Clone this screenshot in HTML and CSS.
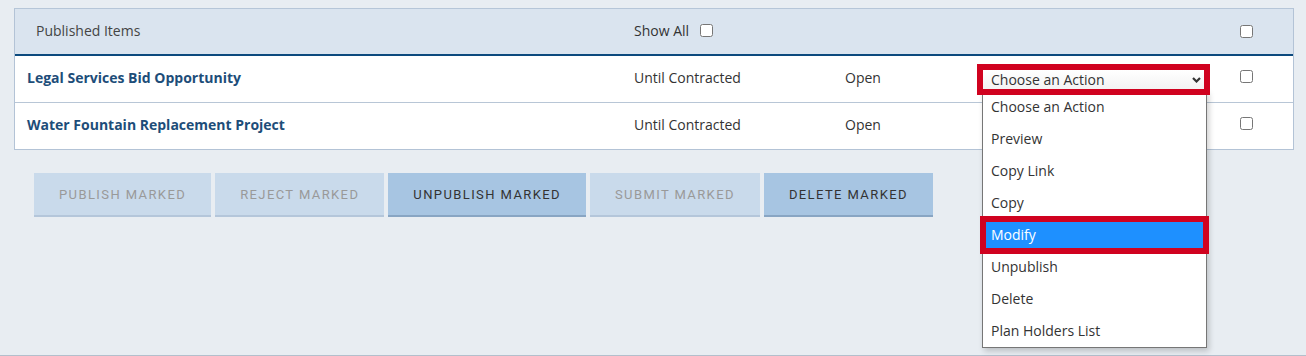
FILE: index.html
```html
<!DOCTYPE html>
<html lang="en">
<head>
  <meta charset="UTF-8">
  <meta name="viewport" content="width=device-width, initial-scale=1.0">
  <title>Published Items</title>
  <link rel="stylesheet" href="styles.css">
</head>
<body>
  <div class="page">
    <div class="items">
      <div class="row head">
        <div class="cell heading">Published Items</div>
        <div class="cell show-all">Show All <input type="checkbox"></div>
        <div class="cell"></div>
        <div class="cell"></div>
        <div class="cell check"><input type="checkbox"></div>
      </div>

      <div class="row">
        <div class="cell name">Legal Services Bid Opportunity</div>
        <div class="cell">Until Contracted</div>
        <div class="cell">Open</div>
        <div class="cell action">
          <div class="picker">
            <div class="picker-box">
              <span>Choose an Action</span>
              <svg class="chevron" width="9" height="6" viewBox="0 0 9 6">
                <path d="M1 1 L4.5 4.5 L8 1" fill="none" stroke="#333" stroke-width="2.2"/>
              </svg>
            </div>
            <!-- open options list -->
            <ul class="options">
              <li>Choose an Action</li>
              <li>Preview</li>
              <li>Copy Link</li>
              <li>Copy</li>
              <li class="picked">Modify</li>
              <li>Unpublish</li>
              <li>Delete</li>
              <li>Plan Holders List</li>
            </ul>
          </div>
        </div>
        <div class="cell check"><input type="checkbox"></div>
      </div>

      <div class="row">
        <div class="cell name">Water Fountain Replacement Project</div>
        <div class="cell">Until Contracted</div>
        <div class="cell">Open</div>
        <div class="cell action"></div>
        <div class="cell check"><input type="checkbox"></div>
      </div>
    </div>

    <div class="bulk">
      <button class="btn" disabled>Publish Marked</button>
      <button class="btn" disabled>Reject Marked</button>
      <button class="btn active">Unpublish Marked</button>
      <button class="btn" disabled>Submit Marked</button>
      <button class="btn active">Delete Marked</button>
    </div>
  </div>
</body>
</html>
```

FILE: styles.css
```css
body {
  margin: 0;
  font-family: "Open Sans", Lato, sans-serif;
  font-size: 14px;
  color: #333;
  background-color: #e8edf2;
}
.page {
  height: 356px;
  box-sizing: border-box;
  padding: 8px 0 0 14px;
  border-bottom: 1px solid #b3bfcc;
}
.items {
  width: 1280px;
  box-sizing: border-box;
  border: 1px solid #b3c3d6;
  border-top-color: #b6c6d8;
  background-color: #fff;
}
.row {
  display: grid;
  grid-template-columns: 607px 211px 132px 263px 1fr;
  align-items: center;
  height: 46px;
  border-bottom: 1px solid #b8c6d6;
}
.row:last-child {
  border-bottom: none;
}
.row.head {
  height: 45px;
  background-color: #dae4ef;
  border-bottom: 2px solid #0c4a7e;
}
.cell {
  padding: 0 12px 3px;
  white-space: nowrap;
}
.heading {
  padding-left: 21px;
  color: #444;
}
.show-all {
  display: flex;
  align-items: center;
  gap: 11px;
}
.show-all input {
  margin-top: 3px;
}
.name {
  font-weight: 700;
  color: #1d4d79;
}
input[type="checkbox"] {
  margin: 0;
  width: 13px;
  height: 13px;
}
.check {
  padding: 0 12px;
  display: flex;
}
.row:not(.head) .check {
  padding-bottom: 5px;
}
.action {
  padding: 0 12px;
}
.picker {
  position: relative;
  width: 233px;
}
.picker-box {
  position: relative;
  z-index: 2;
  height: 31px;
  box-sizing: border-box;
  border: 6px solid #d0021f;
  background: linear-gradient(#fff, #f3f3f3);
  display: flex;
  align-items: center;
  justify-content: space-between;
  padding: 0 3px 0 8px;
  color: #333;
}
.chevron {
  margin-top: 1px;
}
.options {
  position: absolute;
  z-index: 1;
  top: 26px;
  left: 5px;
  width: 225px;
  box-sizing: border-box;
  margin: 0;
  padding: 0;
  list-style: none;
  background-color: #fff;
  border: 1px solid #767676;
  box-shadow: 2px 3px 6px rgba(0,0,0,0.2);
}
.options li {
  height: 32px;
  line-height: 32px;
  padding-left: 8px;
  color: #333;
}
.options li.picked {
  background-color: #1e90ff;
  color: #fff;
  outline: 6px solid #d0021f;
  outline-offset: -3px;
  position: relative;
}
.bulk {
  display: flex;
  gap: 4px;
  margin: 23px 0 0 20px;
}
.btn {
  height: 44px;
  padding: 0 25px;
  border: none;
  border-bottom: 2px solid #88a5c3;
  background-color: #a7c5e2;
  color: #333;
  font-family: Roboto, "Open Sans", sans-serif;
  font-size: 13px;
  letter-spacing: 1.4px;
  text-transform: uppercase;
  cursor: pointer;
}
.btn:disabled {
  background-color: #c9daeb;
  border-bottom-color: #b4c6da;
  color: #999;
  cursor: default;
}
```
